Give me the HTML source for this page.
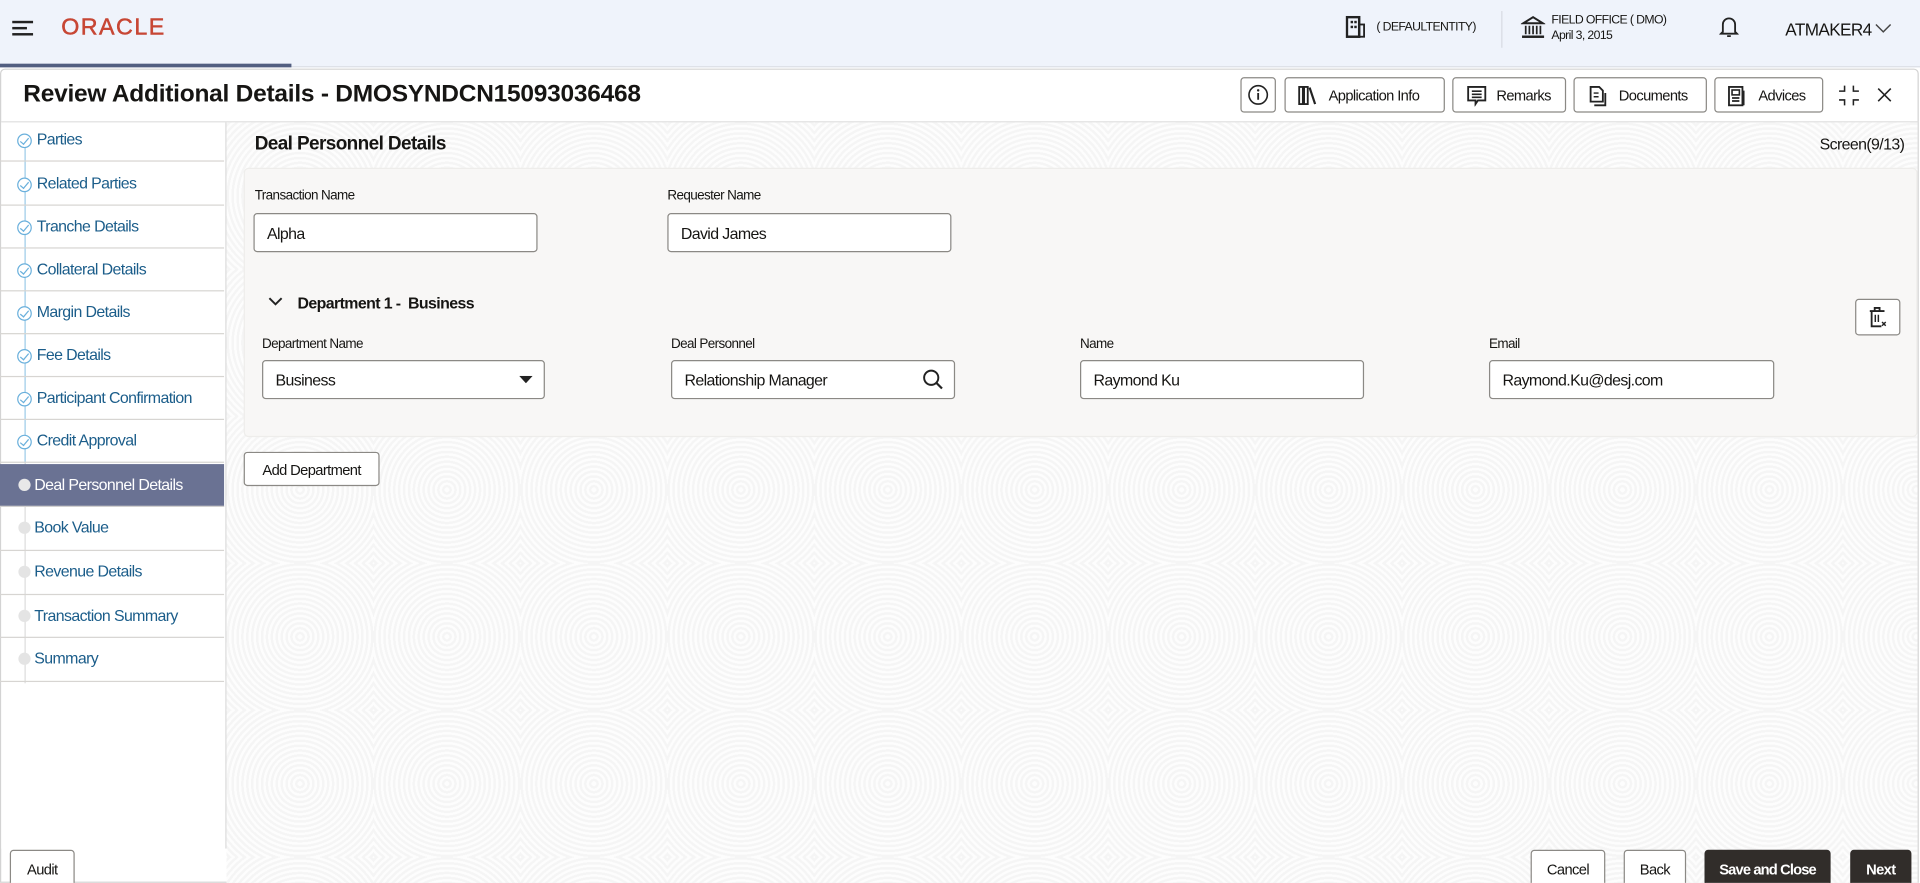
<!DOCTYPE html>
<html><head><meta charset="utf-8">
<style>
html,body{margin:0;padding:0;width:1920px;height:883px;overflow:hidden;background:#fff}
#w{position:absolute;left:0;top:0;width:1568px;height:721px;transform:scale(1.22449);transform-origin:0 0;font-family:"Liberation Sans",sans-serif;color:#161513;overflow:hidden}
.a{position:absolute}
.t{position:absolute;white-space:nowrap;font-size:13px;letter-spacing:-0.5px}
.inp{position:absolute;background:#fff;border:1px solid #8b8985;border-radius:3px;box-sizing:border-box;height:32px;font-size:13px;padding:8px 10px;letter-spacing:-0.5px}
.btn{position:absolute;background:#fff;border:1px solid #8b8985;border-radius:3px;box-sizing:border-box;font-size:12px;letter-spacing:-0.5px;text-align:center}
.nav{position:absolute;left:0;width:183px;height:35px;border-bottom:1px solid #d7d5d2;box-sizing:border-box}
.nav span{position:absolute;left:30px;top:9px;font-size:13px;color:#1b5d8a;letter-spacing:-0.5px;white-space:nowrap}
.nav i{position:absolute;left:14px;top:12px;width:12px;height:12px;border:1px solid #6ab0dc;border-radius:50%;box-sizing:border-box;background:#fff}
.nav i:after{content:"";position:absolute;left:3px;top:1px;width:3px;height:6px;border:solid #6ab0dc;border-width:0 1px 1px 0;transform:rotate(40deg)}
.nav b{position:absolute;left:15px;top:12px;width:10px;height:10px;background:#e4e4e4;border-radius:50%}
.bg{background-color:#fcfcfc;background-image:repeating-radial-gradient(circle at 60px 60px,#fdfdfd 0 2px,#f5f5f5 2px 4px);background-size:120px 120px}
</style></head><body><div id="w">
<div class="a" style="left:0;top:0;width:1568px;height:54px;background:#eff3fb;border-bottom:1px solid #dcdfe6"></div>
<div class="a" style="left:0;top:52px;width:238px;height:3px;background:#525e80"></div>
<div class="a" style="left:10px;top:17px;width:17px;height:2px;background:#222"></div>
<div class="a" style="left:10px;top:22px;width:12px;height:2px;background:#222"></div>
<div class="a" style="left:10px;top:27px;width:17px;height:2px;background:#222"></div>
<div class="t" style="left:50px;top:12px;font-size:19px;color:#c74634;letter-spacing:1.2px;-webkit-text-stroke:0.4px #c74634">ORACLE</div>
<svg class="a" style="left:1099px;top:13px" width="16" height="18" viewBox="0 0 16 18"><rect x="1" y="1" width="10" height="16" fill="none" stroke="#222" stroke-width="2"/><rect x="11" y="7" width="4" height="10" fill="none" stroke="#222" stroke-width="1.5"/><rect x="4" y="4" width="2" height="2" fill="#222"/><rect x="7" y="4" width="2" height="2" fill="#222"/><rect x="4" y="8" width="2" height="2" fill="#222"/><rect x="7" y="8" width="2" height="2" fill="#222"/></svg>
<div class="t" style="left:1124px;top:17px;font-size:10px">( DEFAULTENTITY)</div>
<div class="a" style="left:1226px;top:9px;width:1px;height:30px;background:#d8dbe2"></div>
<svg class="a" style="left:1242px;top:13px" width="20" height="19" viewBox="0 0 20 19"><path d="M2 6 L10 1 L18 6 Z" fill="none" stroke="#222" stroke-width="1.6"/><path d="M4 8v7M7 8v7M10 8v7M13 8v7M16 8v7" stroke="#222" stroke-width="1.4"/><rect x="1" y="16" width="18" height="2" fill="#222"/></svg>
<div class="t" style="left:1267px;top:11px;font-size:10px">FIELD OFFICE ( DMO)</div>
<div class="t" style="left:1267px;top:24px;font-size:10px">April 3, 2015</div>
<svg class="a" style="left:1404px;top:12px" width="16" height="20" viewBox="0 0 16 20"><path d="M3 14V8a5 5 0 0 1 10 0v6l1.5 1.5h-13z" fill="none" stroke="#222" stroke-width="1.5"/><path d="M6.5 17.5h3" stroke="#222" stroke-width="1.5"/></svg>
<div class="t" style="left:1458px;top:16px;font-size:14px">ATMAKER4</div>
<svg class="a" style="left:1531px;top:19px" width="14" height="9" viewBox="0 0 14 9"><path d="M1 1l6 6 6-6" fill="none" stroke="#444" stroke-width="1.2"/></svg>

<div class="a" style="left:0;top:56px;width:1567px;height:665px;border:1px solid #d3d3d3;border-radius:4px 4px 0 0;background:#fff;box-sizing:border-box"></div>
<div class="t" style="left:19px;top:66px;font-size:20px;font-weight:bold;letter-spacing:-0.2px">Review Additional Details - DMOSYNDCN15093036468</div>
<div class="a" style="left:1px;top:99px;width:1566px;height:1px;background:#dedede"></div>
<div class="btn" style="left:1013px;top:63px;width:29px;height:29px"><svg style="margin-top:5px" width="17" height="17" viewBox="0 0 17 17"><circle cx="8.5" cy="8.5" r="7.5" fill="none" stroke="#222" stroke-width="1.3"/><path d="M8.5 7v5.5" stroke="#222" stroke-width="1.5"/><circle cx="8.5" cy="4.8" r="1" fill="#222"/></svg></div>
<div class="btn" style="left:1049px;top:63px;width:131px;height:29px"><svg class="a" style="left:10px;top:6px" width="16" height="16" viewBox="0 0 16 16"><rect x="1" y="1" width="3" height="14" fill="none" stroke="#222" stroke-width="1.5"/><rect x="5" y="1" width="3" height="14" fill="none" stroke="#222" stroke-width="1.5"/><path d="M9.5 1.5l4.5 13.5" stroke="#222" stroke-width="1.8"/></svg><span class="a" style="left:35px;top:7px">Application Info</span></div>
<div class="btn" style="left:1186px;top:63px;width:93px;height:29px"><svg class="a" style="left:11px;top:6px" width="16" height="17" viewBox="0 0 16 17"><path d="M1 1h14v11H9l-2 3v-3H1z" fill="none" stroke="#222" stroke-width="1.5"/><path d="M4 4.5h8M4 7h8M4 9.5h8" stroke="#222" stroke-width="1.3"/></svg><span class="a" style="left:35px;top:7px">Remarks</span></div>
<div class="btn" style="left:1285px;top:63px;width:109px;height:29px"><svg class="a" style="left:12px;top:6px" width="15" height="17" viewBox="0 0 15 17"><path d="M1 1h7l3 3v9H1z" fill="none" stroke="#222" stroke-width="1.5"/><path d="M4 16h9V6" fill="none" stroke="#222" stroke-width="1.5"/><path d="M3.5 6h4M3.5 9h4" stroke="#222" stroke-width="1.2"/></svg><span class="a" style="left:36px;top:7px">Documents</span></div>
<div class="btn" style="left:1400px;top:63px;width:89px;height:29px"><svg class="a" style="left:10px;top:6px" width="16" height="17" viewBox="0 0 16 17"><rect x="1" y="1" width="11" height="15" fill="none" stroke="#222" stroke-width="1.5"/><rect x="3.5" y="3.5" width="6" height="4" fill="none" stroke="#222" stroke-width="1.3"/><path d="M3.5 10h6M3.5 12.5h6M13 4v12" stroke="#222" stroke-width="1.4"/></svg><span class="a" style="left:35px;top:7px">Advices</span></div>
<svg class="a" style="left:1501px;top:69px" width="18" height="18" viewBox="0 0 20 20"><path d="M6 1v5H1M14 1v5h5M6 19v-5H1M14 19v-5h5" fill="none" stroke="#222" stroke-width="1.4"/></svg>
<svg class="a" style="left:1533px;top:71px" width="12" height="13" viewBox="0 0 14 14"><path d="M1 1l12 12M13 1L1 13" stroke="#222" stroke-width="1.5"/></svg>

<div class="a" style="left:1px;top:100px;width:183px;height:593px;background:#fff;border-right:1px solid #dcdcdc"></div>
<div class="a" style="left:20px;top:118px;width:1px;height:262px;background:#9bcbe8"></div>
<div class="a" style="left:20px;top:378px;width:1px;height:180px;background:#ddd"></div>
<div class="nav" style="top:97px"><i></i><span>Parties</span></div>
<div class="nav" style="top:133px"><i></i><span>Related Parties</span></div>
<div class="nav" style="top:168px"><i></i><span>Tranche Details</span></div>
<div class="nav" style="top:203px"><i></i><span>Collateral Details</span></div>
<div class="nav" style="top:238px"><i></i><span>Margin Details</span></div>
<div class="nav" style="top:273px"><i></i><span>Fee Details</span></div>
<div class="nav" style="top:308px"><i></i><span>Participant Confirmation</span></div>
<div class="nav" style="top:343px"><i></i><span>Credit Approval</span></div>
<div class="nav" style="top:379px;height:35px;background:#6a7293"><b style="background:#e8e8e8;top:12px"></b><span style="left:28px;top:9px;color:#fff">Deal Personnel Details</span></div>
<div class="nav" style="top:414px;height:36px"><b></b><span style="left:28px">Book Value</span></div>
<div class="nav" style="top:450px;height:36px"><b></b><span style="left:28px">Revenue Details</span></div>
<div class="nav" style="top:486px;height:35px"><b></b><span style="left:28px">Transaction Summary</span></div>
<div class="nav" style="top:521px;height:36px"><b></b><span style="left:28px">Summary</span></div>
<div class="a" style="left:186px;top:383px;width:4px;height:77px;border:1px solid #ccc;background:#f4f4f4"></div>

<div class="a bg" style="left:185px;top:100px;width:1381px;height:621px"></div>
<div class="t" style="left:208px;top:109px;font-size:15.5px;font-weight:bold">Deal Personnel Details</div>
<div class="t" style="left:1486px;top:110px;font-size:13px">Screen(9/13)</div>
<div class="a" style="left:199px;top:137px;width:1367px;height:220px;background:#f8f7f6;border:1px solid #eeedeb;border-radius:4px;box-sizing:border-box"></div>
<div class="t" style="left:208px;top:154px;font-size:11px">Transaction Name</div>
<div class="inp" style="left:207px;top:174px;width:232px">Alpha</div>
<div class="t" style="left:545px;top:154px;font-size:11px">Requester Name</div>
<div class="inp" style="left:545px;top:174px;width:232px">David James</div>
<svg class="a" style="left:219px;top:242px" width="12" height="9" viewBox="0 0 12 9"><path d="M1 1.5l5 5 5-5" fill="none" stroke="#222" stroke-width="1.6"/></svg>
<div class="t" style="left:243px;top:240px;font-size:13px;font-weight:bold">Department 1 -&nbsp; Business</div>
<div class="btn" style="left:1515px;top:244px;width:37px;height:30px"><svg style="margin-top:5px" width="16" height="18" viewBox="0 0 16 18"><path d="M1 4h12M5 4V1.5h4V4" fill="none" stroke="#222" stroke-width="1.5"/><path d="M2.5 4v12.5h8" fill="none" stroke="#222" stroke-width="1.5"/><path d="M5.5 7v6M8 7v6" stroke="#222" stroke-width="1.2"/><path d="M11 13l3 3M14 13l-3 3" stroke="#222" stroke-width="1.2"/></svg></div>
<div class="t" style="left:214px;top:275px;font-size:11px">Department Name</div>
<div class="inp" style="left:214px;top:294px;width:231px">Business<svg class="a" style="left:209px;top:12px" width="11" height="6" viewBox="0 0 11 6"><path d="M0 0h11L5.5 6z" fill="#222"/></svg></div>
<div class="t" style="left:548px;top:275px;font-size:11px">Deal Personnel</div>
<div class="inp" style="left:548px;top:294px;width:232px">Relationship Manager<svg class="a" style="left:204px;top:6px" width="18" height="18" viewBox="0 0 18 18"><circle cx="7.5" cy="7.5" r="5.8" fill="none" stroke="#222" stroke-width="1.6"/><path d="M11.8 11.8l4.5 4.5" stroke="#222" stroke-width="1.8"/></svg></div>
<div class="t" style="left:882px;top:275px;font-size:11px">Name</div>
<div class="inp" style="left:882px;top:294px;width:232px">Raymond Ku</div>
<div class="t" style="left:1216px;top:275px;font-size:11px">Email</div>
<div class="inp" style="left:1216px;top:294px;width:233px">Raymond.Ku@desj.com</div>
<div class="btn" style="left:199px;top:369px;width:111px;height:28px;padding-top:7px">Add Department</div>

<div class="btn" style="left:8px;top:694px;width:53px;height:30px;padding-top:8px">Audit</div>
<div class="btn" style="left:1250px;top:694px;width:61px;height:30px;padding-top:8px">Cancel</div>
<div class="btn" style="left:1326px;top:694px;width:51px;height:30px;padding-top:8px">Back</div>
<div class="btn" style="left:1392px;top:694px;width:103px;height:30px;padding-top:8px;background:#312d2a;border-color:#312d2a;color:#fff;font-weight:bold;letter-spacing:-0.7px">Save and Close</div>
<div class="btn" style="left:1511px;top:694px;width:50px;height:30px;padding-top:8px;background:#312d2a;border-color:#312d2a;color:#fff;font-weight:bold">Next</div>
</div></body></html>
